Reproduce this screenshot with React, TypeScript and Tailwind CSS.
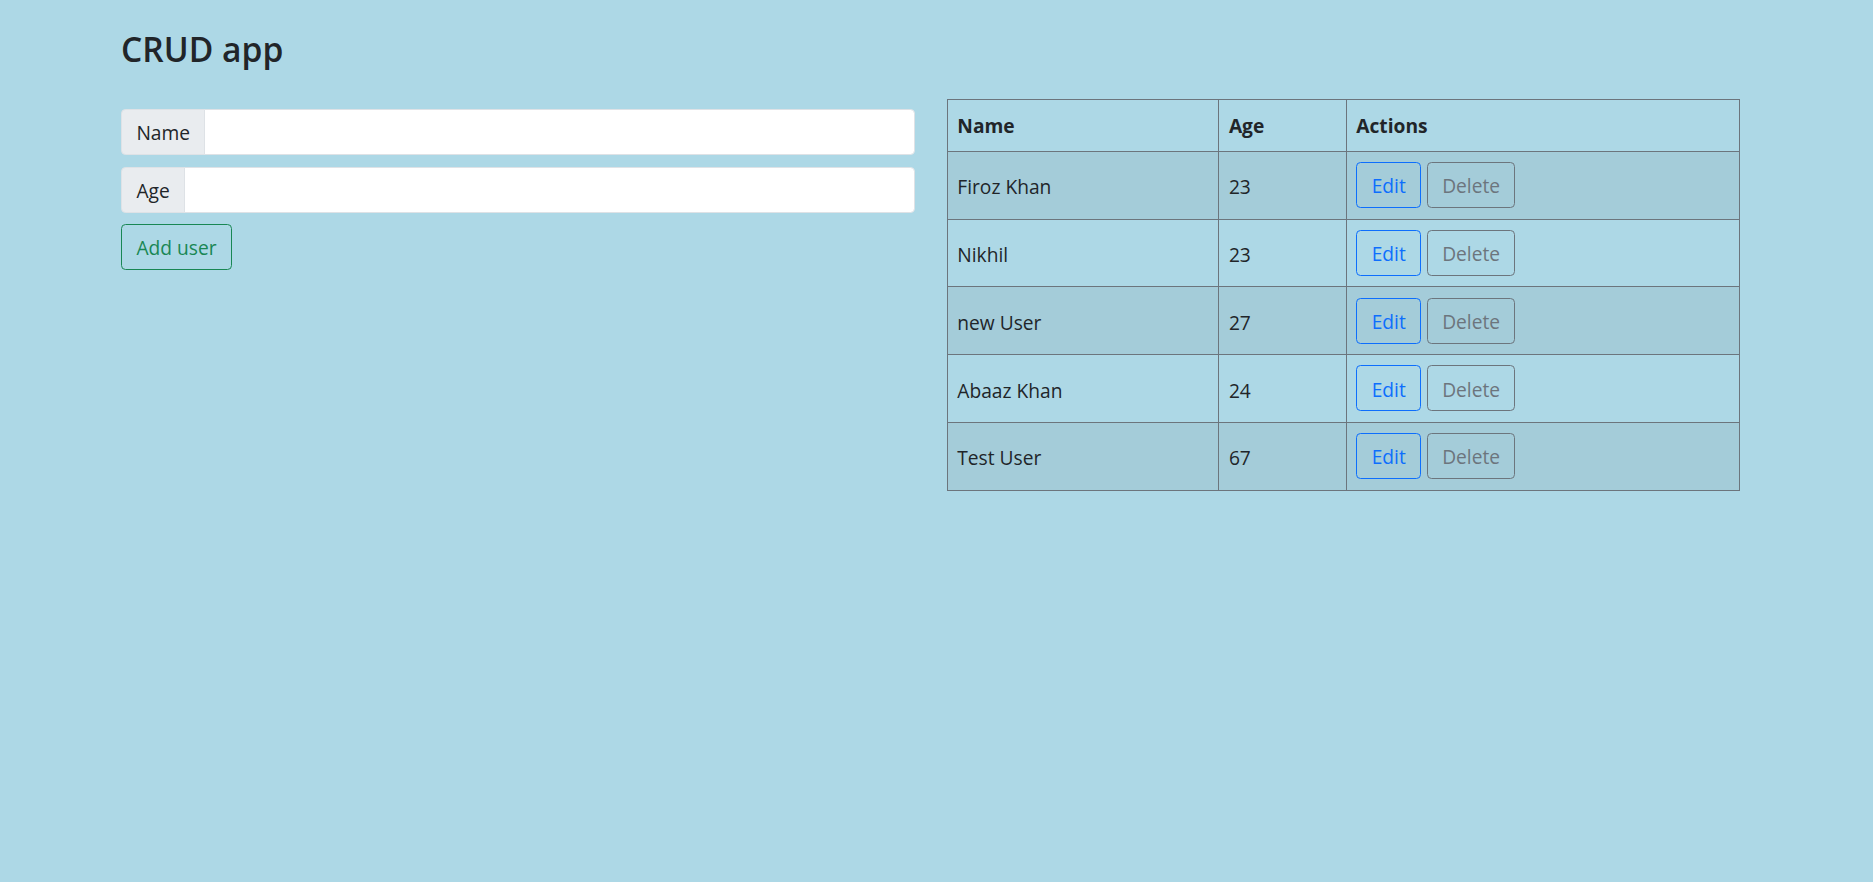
import { useState } from "react";

type User = { name: string; age: number };

const initialUsers: User[] = [
  { name: "Firoz Khan", age: 23 },
  { name: "Nikhil", age: 23 },
  { name: "new User", age: 27 },
  { name: "Abaaz Khan", age: 24 },
  { name: "Test User", age: 67 },
];

function InputField({ label, value, onChange }: { label: string; value: string; onChange: (v: string) => void }) {
  return (
    <div className="flex h-[46px] w-full">
      <span className="flex items-center rounded-l-[4.5px] border border-[#dee2e6] bg-[#e9ecef] px-[14.4px] pt-[3px] text-[19.2px] text-[#212529]">
        {label}
      </span>
      <input
        value={value}
        onChange={(e) => onChange(e.target.value)}
        className="-ml-px min-w-0 flex-1 rounded-r-[4.5px] border border-[#dee2e6] bg-white px-[14.4px] text-[19.2px] text-[#212529] outline-none"
      />
    </div>
  );
}

export default function App() {
  const [users, setUsers] = useState<User[]>(initialUsers);
  const [name, setName] = useState("");
  const [age, setAge] = useState("");

  const addUser = () => {
    if (!name || !age) {
      return;
    }
    setUsers([...users, { name, age: Number(age) }]);
    setName("");
    setAge("");
  };

  return (
    <div className="min-h-screen bg-[#add8e6] pt-[29px] font-['Open_Sans',sans-serif] text-[19.2px] text-[#212529]">
      <div className="ml-[121px] w-[1619.3px]">
        <h3 className="text-[33.6px] leading-[1.2] font-semibold">CRUD app</h3>

        <div className="-mt-px flex items-start gap-[31.7px]">
          <div className="mt-[41px] w-[794px]">
            <InputField label="Name" value={name} onChange={setName} />
            <div className="mt-[11.7px]">
              <InputField label="Age" value={age} onChange={setAge} />
            </div>
            <button
              type="button"
              onClick={addUser}
              className="mt-[11px] h-[46px] rounded-[4.5px] border border-[#198754] px-[14.4px] pt-[3px] text-[19.2px] text-[#198754]"
            >
              Add user
            </button>
          </div>

          <div className="mt-[31px] w-[793.6px]">
            <table className="w-full table-fixed border-collapse border border-[#6c757d]">
              <colgroup>
                <col className="w-[271.6px]" />
                <col className="w-[127.4px]" />
                <col />
              </colgroup>
              <thead>
                <tr className="h-[51.4px]">
                  <th className="border border-[#6c757d] px-[9.6px] pt-[2px] text-left font-bold">Name</th>
                  <th className="border border-[#6c757d] px-[9.6px] pt-[2px] text-left font-bold">Age</th>
                  <th className="border border-[#6c757d] px-[9.6px] pt-[2px] text-left font-bold">Actions</th>
                </tr>
              </thead>
              <tbody>
                {users.map((user, i) => (
                  <tr key={i} className={i % 2 === 0 ? "h-[67.8px] bg-[#a4ccd9]" : "h-[67.8px]"}>
                    <td className="border border-[#6c757d] px-[9.6px] pt-[5px]">{user.name}</td>
                    <td className="border border-[#6c757d] px-[9.6px] pt-[5px]">{user.age}</td>
                    <td className="border border-[#6c757d] px-[9.6px]">
                      <div className="flex gap-[5.6px]">
                        <button
                          type="button"
                          className="h-[46px] rounded-[4.5px] border border-[#0d6efd] px-[14.4px] pt-[3px] text-[#0d6efd]"
                        >
                          Edit
                        </button>
                        <button
                          type="button"
                          onClick={() => setUsers(users.filter((_, j) => j !== i))}
                          className="h-[46px] rounded-[4.5px] border border-[#6c757d] px-[14.4px] pt-[3px] text-[#6c757d]"
                        >
                          Delete
                        </button>
                      </div>
                    </td>
                  </tr>
                ))}
              </tbody>
            </table>
          </div>
        </div>
      </div>
    </div>
  );
}
